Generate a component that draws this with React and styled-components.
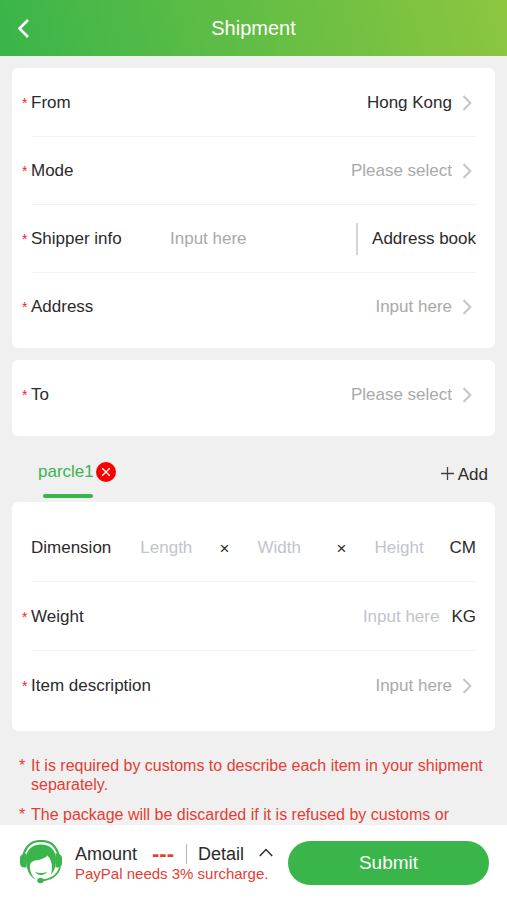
import React from "react";
import styled, { createGlobalStyle } from "styled-components";

const GREEN = "#39b54a";
const RED = "#e43d33";
const INK = "#2b2b2b";

const GlobalStyle = createGlobalStyle`
  * { box-sizing: border-box; }
  body { margin: 0; }
  body, button, input, select {
    font-family: "Liberation Sans", Arial, sans-serif;
    font-size: 17px;
    line-height: 20px;
    color: ${INK};
  }
  button, input, select {
    margin: 0;
    padding: 0;
    border: 0;
    border-radius: 0;
    background: none;
    outline-offset: 2px;
  }
  button { cursor: pointer; white-space: nowrap; }
`;

const Page = styled.div`
  display: flex;
  flex-direction: column;
  height: 100vh;
  background: #f0f0f0;
`;

const Header = styled.header`
  display: grid;
  grid-template-columns: 48px 1fr 48px;
  align-items: center;
  flex: none;
  height: 56px;
  background: linear-gradient(75deg, ${GREEN}, #8dc63f);
`;

const BackButton = styled.button`
  display: flex;
  align-items: center;
  height: 48px;
  padding-left: 16px;
`;

const Title = styled.h1`
  margin: 0;
  font-size: 20px;
  line-height: 24px;
  font-weight: 400;
  text-align: center;
  color: #fff;
`;

const Content = styled.main`
  flex: 1;
  min-height: 0;
  overflow-y: auto;
  scrollbar-width: none;
  padding: 12px 12px 0;
`;

const Row = styled.div`
  display: flex;
  align-items: center;
  height: 68px;

  & + & { box-shadow: 0 -1px 0 #f3f3f3; }
`;

const Card = styled.section`
  padding: ${(p) => (p.$roomy ? "11px 19px" : "1px 19px 7px")};
  border-radius: 6px;
  background: #fff;

  & + & { margin-top: 12px; }
  ${Row} { height: ${(p) => (p.$roomy ? "69px" : "68px")}; }
`;

const Label = styled.label`
  position: relative;
  flex: none;
  width: ${(p) => p.$width || "auto"};
`;

const Star = styled.span`
  position: absolute;
  left: -9px;
  top: 0;
  font-size: 14px;
  color: #f5222d;
`;

const Field = styled.input`
  flex: 1;
  min-width: 0;
  width: 0;
  height: 32px;
  text-align: ${(p) => p.$align || "left"};

  &::placeholder { color: ${(p) => (p.$pale ? "#c0c4cc" : "#a9a9a9")}; opacity: 1; }
`;

const Picker = styled.select`
  flex: 1;
  min-width: 0;
  height: 32px;
  appearance: none;
  text-align-last: right;
  color: ${(p) => (p.$empty ? "#a9a9a9" : INK)};
`;

const ChevronBox = styled.span`
  display: flex;
  flex: none;
  justify-content: center;
  width: 10px;
  margin: 0 4px 0 10px;
`;

const AddressBook = styled.button`
  height: 32px;
  padding-left: 14px;
  border-left: 2px solid #d4d4d4;
`;

const DimensionFields = styled.div`
  display: flex;
  flex: 1;
  align-items: center;
  min-width: 0;
  margin-left: 29px;
`;

const Times = styled.span`
  flex: none;
  width: 18px;
  margin-right: 24px;
  padding-top: 3px;
  text-align: center;
`;

const Unit = styled.span`
  flex: none;
  margin-left: ${(p) => (p.$spaced ? "12px" : "0")};
`;

const TabBar = styled.div`
  display: flex;
  justify-content: space-between;
  height: 66px;
  padding: 0 7px 0 26px;
`;

const Tab = styled.div`
  display: flex;
  flex-direction: column;
  justify-content: flex-end;
  gap: 12px;
  padding-bottom: 4px;
`;

const TabLine = styled.div`
  display: flex;
  align-items: center;
  gap: 2px;
`;

const TabName = styled.button`
  color: ${GREEN};
`;

const RemoveButton = styled.button`
  display: flex;
`;

const Underline = styled.div`
  width: 50px;
  height: 4px;
  margin-left: 5px;
  border-radius: 2px;
  background: ${GREEN};
`;

const AddButton = styled.button`
  display: flex;
  align-items: center;
  align-self: center;
  gap: 4px;
  padding-top: 12px;
`;

const Notes = styled.ul`
  display: grid;
  gap: 11px;
  margin: 25px 0 0;
  padding: 0 5px 0 7px;
  list-style: none;
  font-size: 16px;
  line-height: 19px;
  color: ${RED};
`;

const Note = styled.li`
  display: grid;
  grid-template-columns: 12px 1fr;
`;

const Footer = styled.footer`
  display: flex;
  align-items: center;
  flex: none;
  height: 75px;
  padding: 0 18px;
  background: #fff;
`;

const SupportButton = styled.button`
  display: flex;
  flex: none;
  margin-right: 12px;
`;

const Summary = styled.div`
  flex: none;
  margin-right: 14px;
`;

const AmountLine = styled.div`
  display: flex;
  align-items: center;
  height: 22px;
  font-size: 18px;
`;

const Amount = styled.strong`
  margin: 0 12px 0 15px;
  font-size: 22px;
  color: ${RED};
`;

const DetailButton = styled.button`
  display: flex;
  align-items: center;
  gap: 15px;
  padding-left: 11px;
  border-left: 1px solid #b5b5b5;
  font-size: 18px;
`;

const Surcharge = styled.div`
  width: 199px;
  font-size: 15px;
  line-height: 18px;
  white-space: nowrap;
  color: ${RED};
`;

const Submit = styled.button`
  flex: 1;
  height: 44px;
  border-radius: 22px;
  font-size: 19px;
  color: #fff;
  background: ${GREEN};
`;

const Chevron = () => (
  <ChevronBox>
    <svg width="10" height="16" viewBox="0 0 10 16" fill="none" stroke="#c3c5ca" strokeWidth="2" aria-hidden="true">
      <path d="M1.5 1L8.3 8L1.5 15" />
    </svg>
  </ChevronBox>
);

const FieldLabel = ({ htmlFor, required = true, width, children }) => (
  <Label htmlFor={htmlFor} $width={width}>
    {required && <Star aria-hidden="true">*</Star>}
    {children}
  </Label>
);

const SelectRow = ({ id, label, value }) => (
  <Row>
    <FieldLabel htmlFor={id}>{label}</FieldLabel>
    <Picker id={id} $empty={!value}>
      <option>{value || "Please select"}</option>
    </Picker>
    <Chevron />
  </Row>
);

const InputRow = ({ id, label }) => (
  <Row>
    <FieldLabel htmlFor={id}>{label}</FieldLabel>
    <Field id={id} placeholder="Input here" $align="right" />
    <Chevron />
  </Row>
);

const SupportIcon = () => (
  <svg width="45" height="45" viewBox="0 0 45 45" fill="none" aria-hidden="true">
    <path d="M5.500 15C8 5.500 14.500 1 23 1S38 5.500 40.500 15" stroke={GREEN} strokeWidth="2.200" />
    <path d="M8.500 13.500V27.500H7C3.500 27.500 2 26 2 23V18C2 15.500 4.500 13.500 8.500 13.500Z" fill={GREEN} />
    <path d="M37.500 13.500V27.500H39C42.500 27.500 44 26 44 23V18C44 15.500 41.500 13.500 37.500 13.500Z" fill={GREEN} />
    <path
      d="M8 19C8 10 14 4.500 23 4.500S38 10 38 19C38 26 36.500 31 33 34.500C34.500 29 35 21.500 29.500 15.500C25.500 20 19 19.500 14.500 21.500C11.500 23 11.500 27 12.500 31C13.300 34.500 15 37 17.500 39.500C11.500 36.500 8 29.500 8 19Z"
      fill={GREEN}
    />
    <path d="M17 31.500C20.500 33.500 25.500 33.500 29 31.500C27 36 19 36 17 31.500Z" fill={GREEN} />
    <path d="M42 27C40 34.500 34 39.500 24 40.300" stroke={GREEN} strokeWidth="1.700" />
    <ellipse cx="22.500" cy="40.500" rx="3.200" ry="2.700" fill={GREEN} />
  </svg>
);

export default function App() {
  return (
    <Page>
      <GlobalStyle />
      <Header>
        <BackButton aria-label="Back">
          <svg width="14" height="20" viewBox="0 0 14 20" fill="none" stroke="#fff" strokeWidth="2.600" aria-hidden="true">
            <path d="M12 2L3.500 10.500L12 19" />
          </svg>
        </BackButton>
        <Title>Shipment</Title>
      </Header>

      <Content>
        <Card>
          <SelectRow id="from" label="From" value="Hong Kong" />
          <SelectRow id="mode" label="Mode" />
          <Row>
            <FieldLabel htmlFor="shipper" width="139px">Shipper info</FieldLabel>
            <Field id="shipper" placeholder="Input here" />
            <AddressBook>Address book</AddressBook>
          </Row>
          <InputRow id="address" label="Address" />
        </Card>

        <Card>
          <SelectRow id="to" label="To" />
        </Card>

        <TabBar>
          <Tab>
            <TabLine>
              <TabName>parcle1</TabName>
              <RemoveButton aria-label="Remove parcle1">
                <svg width="20" height="20" viewBox="0 0 20 20" aria-hidden="true">
                  <circle cx="10" cy="10" r="10" fill="#f80000" />
                  <path d="M6.200 6.200L13.800 13.800M13.800 6.200L6.200 13.800" stroke="#fff" strokeWidth="1.300" />
                </svg>
              </RemoveButton>
            </TabLine>
            <Underline />
          </Tab>
          <AddButton>
            <svg width="13" height="16" viewBox="0 0 13 16" stroke="#444" strokeWidth="1.300" aria-hidden="true">
              <path d="M6.500 0V13M0 6.500H13" />
            </svg>
            Add
          </AddButton>
        </TabBar>

        <Card $roomy>
          <Row>
            <FieldLabel htmlFor="length" required={false}>Dimension</FieldLabel>
            <DimensionFields>
              <Field id="length" placeholder="Length" aria-label="Length" $pale />
              <Times>×</Times>
              <Field placeholder="Width" aria-label="Width" $pale />
              <Times>×</Times>
              <Field placeholder="Height" aria-label="Height" $pale />
            </DimensionFields>
            <Unit>CM</Unit>
          </Row>
          <Row>
            <FieldLabel htmlFor="weight">Weight</FieldLabel>
            <Field id="weight" placeholder="Input here" $align="right" $pale />
            <Unit $spaced>KG</Unit>
          </Row>
          <InputRow id="item" label="Item description" />
        </Card>

        <Notes>
          <Note>
            <span>*</span>
            <span>It is required by customs to describe each item in your shipment separately.</span>
          </Note>
          <Note>
            <span>*</span>
            <span>The package will be discarded if it is refused by customs or</span>
          </Note>
        </Notes>
      </Content>

      <Footer>
        <SupportButton aria-label="Customer support">
          <SupportIcon />
        </SupportButton>
        <Summary>
          <AmountLine>
            Amount
            <Amount>---</Amount>
            <DetailButton>
              Detail
              <svg width="14" height="12" viewBox="0 0 14 12" fill="none" stroke={INK} strokeWidth="1.500" aria-hidden="true">
                <path d="M0.800 8L7 1.500L13.200 8" />
              </svg>
            </DetailButton>
          </AmountLine>
          <Surcharge>PayPal needs 3% surcharge.</Surcharge>
        </Summary>
        <Submit>Submit</Submit>
      </Footer>
    </Page>
  );
}
